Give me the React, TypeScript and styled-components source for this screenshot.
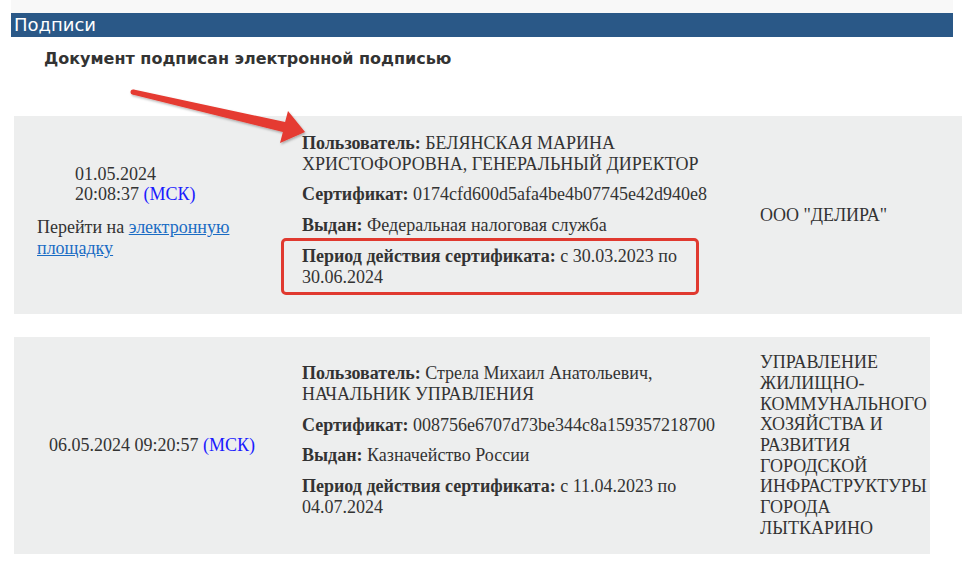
import React from 'react';
import styled, { createGlobalStyle } from 'styled-components';

const GlobalStyle = createGlobalStyle`
  body {
    margin: 0;
    background: #fff;
  }
  * {
    box-sizing: border-box;
  }
`;

const Page = styled.div`
  position: relative;
  width: 979px;
  height: 566px;
  overflow: hidden;
  font-family: 'Liberation Serif', 'Times New Roman', serif;
  font-size: 18px;
  line-height: 20.7px;
  color: #333;
`;

const TopStrip = styled.div`
  margin-left: 11px;
  width: 942px;
  height: 13px;
  background: #f8f8f8;
`;

const SectionBar = styled.h1`
  margin: 0 0 0 11px;
  width: 942px;
  height: 24px;
  padding-left: 3px;
  background: #2a5887;
  color: #fff;
  font-family: 'DejaVu Sans', Verdana, sans-serif;
  font-size: 18px;
  font-weight: normal;
  line-height: 24px;
`;

const Heading = styled.h2`
  margin: 11px 0 0;
  padding-left: 44px;
  font-family: 'DejaVu Sans', Verdana, sans-serif;
  font-size: 16px;
  font-weight: bold;
  line-height: 21px;
  color: #333;
`;

const Card = styled.div<{ $width: number; $top: number; $pad: number }>`
  display: flex;
  align-items: center;
  margin: ${(p) => p.$top}px 0 0 14px;
  width: ${(p) => p.$width}px;
  padding: ${(p) => p.$pad}px 0;
  background: #edeeee;
  overflow: hidden;
`;

const DateCell = styled.div<{ $centered?: boolean }>`
  flex: none;
  width: 276px;
  padding: ${(p) => (p.$centered ? '0' : '0 0 8px 23px')};
  text-align: ${(p) => (p.$centered ? 'center' : 'left')};
`;

const DateBlock = styled.div`
  margin-left: 38px;
  width: 132px;
`;

const Zone = styled.span`
  color: #1a1aff;
`;

const MarketLink = styled.p`
  margin: 12px 0 0;
  width: 230px;

  a {
    color: #1a6cc4;
    text-decoration: underline;
  }
`;

const DetailsCell = styled.div`
  flex: none;
  width: 446px;
  margin-left: 12px;
`;

const Item = styled.p`
  position: relative;
  margin: 0 0 10px;
`;

const Label = styled.b`
  font-weight: bold;
`;

const Highlight = styled.span`
  position: absolute;
  left: -21px;
  top: -8px;
  width: 418px;
  height: 57px;
  border: 3px solid #e0392f;
  border-radius: 5px;
  pointer-events: none;
`;

const OrgCell = styled.div`
  flex: 1;
  min-width: 0;
  margin-left: 12px;
`;

const Arrow = styled.svg`
  position: absolute;
  left: 0;
  top: 0;
  pointer-events: none;
`;

export default function App() {
  return (
    <Page>
      <GlobalStyle />
      <TopStrip />
      <SectionBar>Подписи</SectionBar>
      <Heading>Документ подписан электронной подписью</Heading>

      <Card $width={948} $top={47} $pad={17}>
        <DateCell>
          <DateBlock>
            01.05.2024 20:08:37 <Zone>(МСК)</Zone>
          </DateBlock>
          <MarketLink>
            Перейти на <a href="#">электронную площадку</a>
          </MarketLink>
        </DateCell>
        <DetailsCell>
          <Item>
            <Label>Пользователь:</Label> БЕЛЯНСКАЯ МАРИНА ХРИСТОФОРОВНА, ГЕНЕРАЛЬНЫЙ ДИРЕКТОР
          </Item>
          <Item>
            <Label>Сертификат:</Label> 0174cfd600d5afa4be4b07745e42d940e8
          </Item>
          <Item>
            <Label>Выдан:</Label> Федеральная налоговая служба
          </Item>
          <Item>
            <Label>Период действия сертификата:</Label> с 30.03.2023 по 30.06.2024
            <Highlight />
          </Item>
        </DetailsCell>
        <OrgCell>ООО "ДЕЛИРА"</OrgCell>
      </Card>

      <Card $width={916} $top={23} $pad={15}>
        <DateCell $centered>
          06.05.2024 09:20:57 <Zone>(МСК)</Zone>
        </DateCell>
        <DetailsCell>
          <Item>
            <Label>Пользователь:</Label> Стрела Михаил Анатольевич, НАЧАЛЬНИК УПРАВЛЕНИЯ
          </Item>
          <Item>
            <Label>Сертификат:</Label> 008756e6707d73be344c8a159357218700
          </Item>
          <Item>
            <Label>Выдан:</Label> Казначейство России
          </Item>
          <Item>
            <Label>Период действия сертификата:</Label> с 11.04.2023 по 04.07.2024
          </Item>
        </DetailsCell>
        <OrgCell>
          УПРАВЛЕНИЕ ЖИЛИЩНО-КОММУНАЛЬНОГО ХОЗЯЙСТВА И РАЗВИТИЯ ГОРОДСКОЙ ИНФРАСТРУКТУРЫ ГОРОДА ЛЫТКАРИНО
        </OrgCell>
      </Card>

      <Arrow width={979} height={566} viewBox="0 0 979 566">
        <defs>
          <filter id="arrowShadow" x="-10%" y="-50%" width="120%" height="200%">
            <feDropShadow dx="1" dy="1.5" stdDeviation="1" floodColor="#000" floodOpacity="0.3" />
          </filter>
        </defs>
        <g filter="url(#arrowShadow)" fill="#e53a30">
          <circle cx={133} cy={92} r={2.5} />
          <polygon points="133.6,89.6 285.1,122.1 288,111 305,132 280,143 282.9,131.9 132.4,94.4" />
        </g>
      </Arrow>
    </Page>
  );
}
